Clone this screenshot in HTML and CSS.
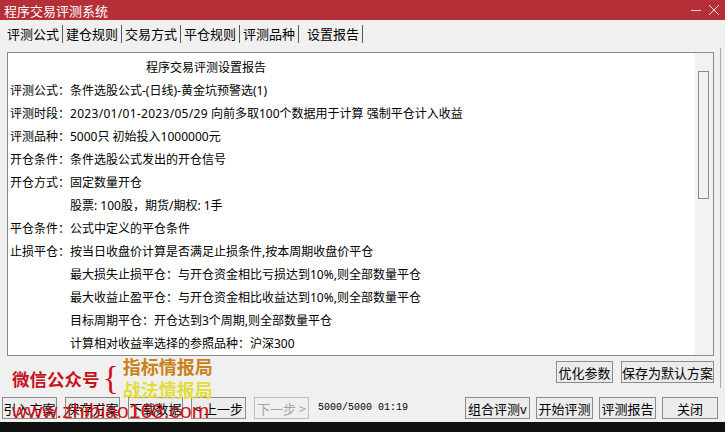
FILE: index.html
```html
<!DOCTYPE html>
<html lang="zh-CN">
<head>
    <meta charset="UTF-8">
    <meta name="viewport" content="width=device-width, initial-scale=1.0">
    <title>程序交易评测系统</title>
    <link rel="stylesheet" href="styles.css">
</head>
<body>
    <div class="app">
        <div class="titlebar">
            <span>程序交易评测系统</span>
            <div class="win-controls">
                <svg width="12" height="12" viewBox="0 0 12 12"><path d="M1 6.5h10" stroke="#f6d9db" stroke-width="1"/></svg>
                <svg width="12" height="12" viewBox="0 0 12 12"><path d="M1 1l10 10M11 1L1 11" stroke="#f6d9db" stroke-width="1"/></svg>
            </div>
        </div>

        <div class="tabs">
            <span class="tab">评测公式</span>
            <span class="tab">建仓规则</span>
            <span class="tab">交易方式</span>
            <span class="tab">平仓规则</span>
            <span class="tab">评测品种</span>
            <span class="tab active">设置报告</span>
        </div>

        <div class="tab-page">
            <div class="report">
                <div class="report-text">
                    <div class="line title">程序交易评测设置报告</div>
                    <div class="line">评测公式：条件选股公式-(日线)-黄金坑预警选(1)</div>
                    <div class="line">评测时段：<span class="num">2023/01/01-2023/05/29</span> 向前多取100个数据用于计算 强制平仓计入收益</div>
                    <div class="line">评测品种：5000只 初始投入1000000元</div>
                    <div class="line">开仓条件：条件选股公式发出的开仓信号</div>
                    <div class="line">开仓方式：固定数量开仓</div>
                    <div class="line sub">股票: 100股，期货/期权: 1手</div>
                    <div class="line">平仓条件：公式中定义的平仓条件</div>
                    <div class="line">止损平仓：按当日收盘价计算是否满足止损条件,按本周期收盘价平仓</div>
                    <div class="line sub">最大损失止损平仓：与开仓资金相比亏损达到10%,则全部数量平仓</div>
                    <div class="line sub">最大收益止盈平仓：与开仓资金相比收益达到10%,则全部数量平仓</div>
                    <div class="line sub">目标周期平仓：开仓达到3个周期,则全部数量平仓</div>
                    <div class="line sub">计算相对收益率选择的参照品种：沪深300</div>
                </div>
                <div class="scrollbar">
                    <div class="thumb"></div>
                </div>
            </div>
            <div class="report-actions">
                <button class="btn w57">优化参数</button>
                <button class="btn w93">保存为默认方案</button>
            </div>
        </div>

        <div class="footer">
            <div class="footer-left">
                <button class="btn w55">引入方案</button>
                <button class="btn w55">保存方案</button>
                <button class="btn w55">下载数据</button>
                <button class="btn w55">&lt; 上一步</button>
                <button class="btn w55" disabled>下一步 &gt;</button>
                <span class="progress">5000/5000 01:19</span>
            </div>
            <div class="footer-right">
                <button class="btn w65">组合评测v</button>
                <button class="btn w57">开始评测</button>
                <button class="btn w57">评测报告</button>
                <button class="btn w56">关闭</button>
            </div>
        </div>

        <div class="taskbar"></div>

        <!-- 水印 -->
        <div class="watermark">
            <div class="wm-row">
                <span class="wm-wechat">微信公众号</span>
                <span class="wm-brace">{</span>
                <div class="wm-names">
                    <span class="wm-name1">指标情报局</span>
                    <span class="wm-name2">战法情报局</span>
                </div>
            </div>
            <div class="wm-url">www.zhibiao168.com</div>
        </div>
    </div>
</body>
</html>
```

FILE: styles.css
```css
* {
    box-sizing: border-box;
}
body {
    margin: 0;
    font-family: "Noto Sans CJK SC", "Noto Sans", sans-serif;
    background-color: #f0f0f0;
}
.app {
    position: relative;
    width: 725px;
    height: 432px;
    display: flex;
    flex-direction: column;
    background-color: #f0f0f0;
    overflow: hidden;
}
.titlebar {
    height: 20px;
    flex: none;
    display: flex;
    align-items: center;
    justify-content: space-between;
    padding: 0 5px 0 4px;
    background-color: #b42f37;
    color: #fff;
    font-size: 13px;
}
.win-controls {
    display: flex;
    gap: 6px;
}
.tabs {
    height: 28px;
    flex: none;
    display: flex;
    align-items: center;
    padding-left: 4px;
    font-size: 13px;
    color: #000;
}
.tab {
    padding: 0 3px;
    line-height: 18px;
    border-right: 1px solid #5a5a5a;
}
.tab.active {
    padding: 0 3px 0 8px;
}
.tab-page {
    height: 340px;
    flex: none;
    padding: 4px 0 0 7px;
    margin-right: 4px;
    border-right: 1px solid #a8a8a8;
}
.report {
    width: 707px;
    height: 304px;
    display: flex;
    background-color: #fff;
    border: 1px solid #8a8a8a;
}
.report-text {
    flex: 1;
    overflow: hidden;
    padding: 3px 0 0 2px;
    font-family: "Noto Sans", "Noto Sans CJK SC", sans-serif;
    font-size: 12px;
    line-height: 23px;
    color: #000;
    white-space: nowrap;
}
.num {
    letter-spacing: 0.3px;
}
.line.title {
    padding-left: 136px;
}
.line.sub {
    padding-left: 60px;
}
.scrollbar {
    width: 18px;
    flex: none;
    padding: 18px 4px 0 3px;
    background-color: #f2f2f2;
}
.thumb {
    height: 128px;
    border: 1px solid #8a8a8a;
    background-color: #f0f0f0;
}
.report-actions {
    display: flex;
    justify-content: flex-end;
    gap: 8px;
    margin-top: 5px;
    width: 707px;
}
.btn {
    height: 22px;
    padding: 0;
    font-family: "Noto Sans CJK SC", "Noto Sans", sans-serif;
    font-size: 13px;
    color: #000;
    background-color: #ececec;
    border: 1px solid #8c8c8c;
    border-radius: 0;
    white-space: nowrap;
}
.btn:disabled {
    color: #a3a3a3;
    border-color: #bdbdbd;
    background-color: #f0f0f0;
}
.w55 { width: 55px; }
.w56 { width: 56px; }
.w57 { width: 57px; }
.w65 { width: 65px; }
.w93 { width: 93px; }
.footer {
    height: 34px;
    flex: none;
    display: flex;
    justify-content: space-between;
    padding: 9px 7px 0 2px;
}
.footer-left,
.footer-right {
    display: flex;
    align-items: flex-start;
    gap: 8px;
}
.footer-right {
    gap: 6px;
}
.progress {
    margin-left: 1px;
    font-family: "Liberation Mono", monospace;
    font-size: 10px;
    line-height: 22px;
    color: #000;
}
.taskbar {
    flex: 1;
    background-color: #101010;
}
.watermark {
    position: absolute;
    left: 12px;
    top: 355px;
}
.wm-row {
    display: flex;
    align-items: center;
}
.wm-wechat {
    font-size: 17.5px;
    font-weight: bold;
    color: #c8141c;
}
.wm-brace {
    margin: 0 4px 0 3px;
    font-family: "Liberation Serif", serif;
    font-size: 34px;
    line-height: 40px;
    color: #c8141c;
}
.wm-names {
    display: flex;
    flex-direction: column;
    font-size: 18px;
    font-weight: bold;
    line-height: 23px;
}
.wm-name1 {
    color: #c98218;
}
.wm-name2 {
    color: #e3dc3a;
}
.wm-url {
    margin-top: -1px;
    font-family: "Liberation Sans", Arial, sans-serif;
    font-size: 21px;
    line-height: 22px;
    color: #d0141c;
}
```
